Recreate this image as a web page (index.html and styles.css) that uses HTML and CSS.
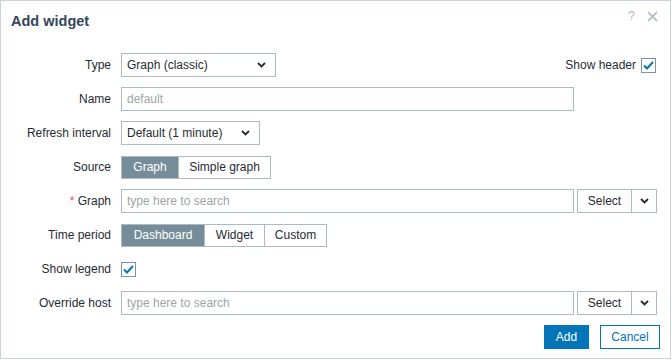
FILE: index.html
```html
<!doctype html>
<html lang="en">
  <head>
    <meta charset="UTF-8" />
    <title>Add widget</title>
    <link rel="stylesheet" href="styles.css">
  </head>
  <body>
    <div class="dialog">
      <div class="dialog-header">
        <h4>Add widget</h4>
        <div class="header-tools">
          <span class="help-btn">?</span>
          <span class="close-btn">
            <svg width="11" height="11" viewBox="0 0 11 11"><path d="M1 1L10 10M10 1L1 10" stroke="#a9b6bd" stroke-width="1.6"/></svg>
          </span>
        </div>
      </div>

      <form class="form-grid">
        <label class="form-label">Type</label>
        <div class="form-field">
          <div class="select" style="width: 155px">
            <span>Graph (classic)</span>
            <svg class="chevron" width="9" height="6" viewBox="0 0 9 6"><path d="M1 1L4.5 4.5L8 1" fill="none" stroke="#1f2c33" stroke-width="1.8"/></svg>
          </div>
          <div class="show-header">
            <span>Show header</span>
            <span class="checkbox">
              <svg width="11" height="9" viewBox="0 0 11 9"><path d="M1 4.5L4 7.5L10 1" fill="none" stroke="#0275b8" stroke-width="2"/></svg>
            </span>
          </div>
        </div>

        <label class="form-label">Name</label>
        <div class="form-field">
          <input class="text-input" type="text" placeholder="default" />
        </div>

        <label class="form-label">Refresh interval</label>
        <div class="form-field">
          <div class="select" style="width: 139px">
            <span>Default (1 minute)</span>
            <svg class="chevron" width="9" height="6" viewBox="0 0 9 6"><path d="M1 1L4.5 4.5L8 1" fill="none" stroke="#1f2c33" stroke-width="1.8"/></svg>
          </div>
        </div>

        <label class="form-label">Source</label>
        <div class="form-field">
          <div class="segmented">
            <span class="segment active" style="width: 56px">Graph</span>
            <span class="segment" style="width: 92px">Simple graph</span>
          </div>
        </div>

        <label class="form-label"><span class="required">*</span> Graph</label>
        <div class="form-field">
          <input class="text-input" type="text" placeholder="type here to search" />
          <div class="select-group">
            <span class="select-btn">Select</span>
            <span class="select-arrow">
              <svg width="9" height="6" viewBox="0 0 9 6"><path d="M1 1L4.5 4.5L8 1" fill="none" stroke="#1f2c33" stroke-width="1.8"/></svg>
            </span>
          </div>
        </div>

        <label class="form-label">Time period</label>
        <div class="form-field">
          <div class="segmented">
            <span class="segment active" style="width: 82px">Dashboard</span>
            <span class="segment" style="width: 60px">Widget</span>
            <span class="segment" style="width: 62px">Custom</span>
          </div>
        </div>

        <label class="form-label">Show legend</label>
        <div class="form-field">
          <span class="checkbox">
            <svg width="11" height="9" viewBox="0 0 11 9"><path d="M1 4.5L4 7.5L10 1" fill="none" stroke="#0275b8" stroke-width="2"/></svg>
          </span>
        </div>

        <label class="form-label">Override host</label>
        <div class="form-field">
          <input class="text-input" type="text" placeholder="type here to search" />
          <div class="select-group">
            <span class="select-btn">Select</span>
            <span class="select-arrow">
              <svg width="9" height="6" viewBox="0 0 9 6"><path d="M1 1L4.5 4.5L8 1" fill="none" stroke="#1f2c33" stroke-width="1.8"/></svg>
            </span>
          </div>
        </div>
      </form>

      <div class="dialog-footer">
        <button class="btn-primary">Add</button>
        <button class="btn-alt">Cancel</button>
      </div>
    </div>
  </body>
</html>
```

FILE: styles.css
```css
/* Reset and general styles */
* {
  margin: 0;
  padding: 0;
  box-sizing: border-box;
  font-family: "Liberation Sans", Arial, sans-serif;
}

body {
  background-color: #ffffff;
  color: #1f2c33;
  font-size: 12px;
}

/* Dialog */
.dialog {
  width: 671px;
  height: 359px;
  border: 1px solid #c9d2d7;
  background-color: #ffffff;
}

.dialog-header {
  display: flex;
  justify-content: space-between;
  align-items: flex-start;
  height: 52px;
  padding: 12px 12px 0 10px;
}

.dialog-header h4 {
  font-size: 14.5px;
  font-weight: bold;
  color: #33475b;
}

.header-tools {
  display: flex;
  align-items: center;
  gap: 12px;
  margin-top: -4px;
}

.help-btn {
  color: #a9b6bd;
  font-size: 12px;
}

.close-btn {
  display: flex;
  margin-top: 1px;
}

/* Form */
.form-grid {
  display: grid;
  grid-template-columns: 110px 1fr;
  column-gap: 10px;
  row-gap: 10px;
  padding-right: 14px;
}

.form-label {
  height: 24px;
  line-height: 24px;
  text-align: right;
  white-space: nowrap;
}

.required {
  color: #e45959;
}

.form-field {
  display: flex;
  align-items: center;
  height: 24px;
}

.text-input {
  width: 453px;
  height: 24px;
  border: 1px solid #acbbc2;
  padding: 0 5px;
  font-size: 12px;
  color: #1f2c33;
  outline: none;
}

.text-input::placeholder {
  color: #9ea4a8;
}

.select {
  display: flex;
  justify-content: space-between;
  align-items: center;
  height: 24px;
  border: 1px solid #acbbc2;
  padding: 0 9px 0 5px;
}

.show-header {
  display: flex;
  align-items: center;
  gap: 5px;
  margin-left: auto;
  margin-right: 1px;
}

.checkbox {
  display: flex;
  justify-content: center;
  align-items: center;
  width: 15px;
  height: 15px;
  border: 1px solid #7f939d;
  background-color: #ffffff;
}

/* Segmented buttons */
.segmented {
  display: flex;
  height: 23px;
  border: 1px solid #acbbc2;
}

.segment {
  display: flex;
  justify-content: center;
  align-items: center;
  border-left: 1px solid #acbbc2;
  color: #1f2c33;
}

.segment:first-child {
  border-left: none;
}

.segment.active {
  background-color: #768d99;
  color: #ffffff;
}

/* Select button group */
.select-group {
  display: flex;
  height: 24px;
  margin-left: 3px;
  border: 1px solid #acbbc2;
}

.select-btn {
  display: flex;
  align-items: center;
  justify-content: center;
  width: 54px;
  border-right: 1px solid #acbbc2;
}

.select-arrow {
  display: flex;
  align-items: center;
  justify-content: center;
  width: 24px;
}

/* Footer */
.dialog-footer {
  display: flex;
  justify-content: flex-end;
  gap: 11px;
  padding: 10px 10px 0 0;
}

.btn-primary,
.btn-alt {
  height: 24px;
  font-size: 12px;
  cursor: pointer;
}

.btn-primary {
  width: 45px;
  background-color: #0275b8;
  border: 1px solid #0275b8;
  color: #ffffff;
}

.btn-alt {
  width: 60px;
  background-color: #ffffff;
  border: 1px solid #0275b8;
  color: #0275b8;
}
```
